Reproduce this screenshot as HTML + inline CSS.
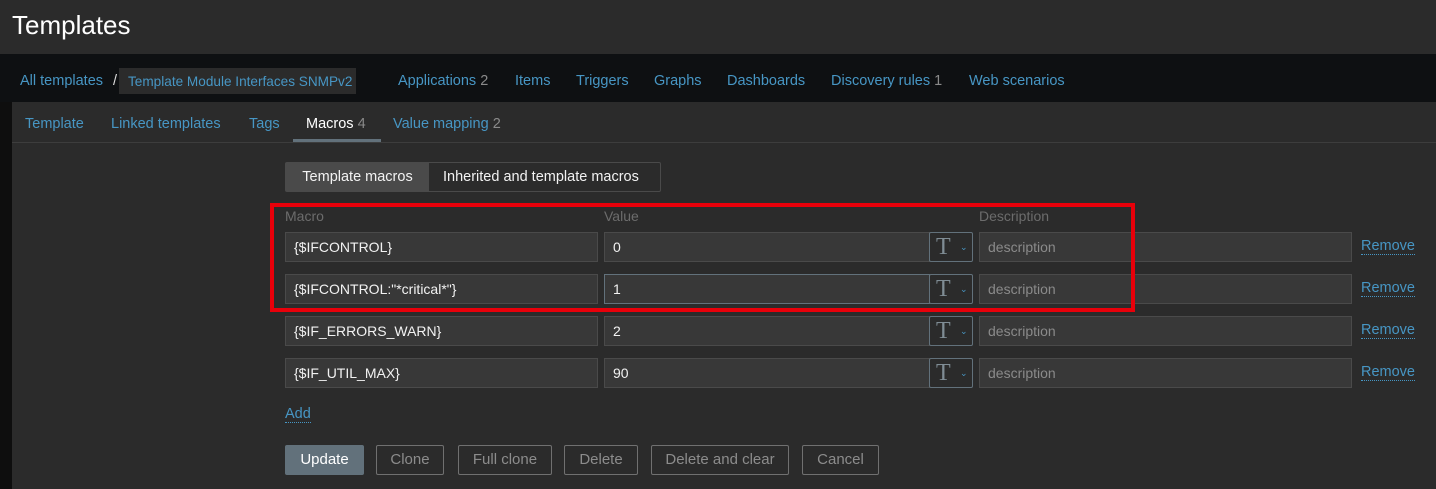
<!DOCTYPE html><html><head><style>
*{box-sizing:border-box;margin:0;padding:0}
body{width:1436px;height:489px;background:#0e0e0e;font-family:"Liberation Sans",sans-serif;font-size:14px;position:relative;overflow:hidden;color:#f2f2f2}
.a{position:absolute;white-space:nowrap}
.l{color:#4796c4}
.g{color:#8a8a8a}
.n{position:absolute;top:73px;font-size:14.5px;white-space:nowrap;color:#4796c4}
.tb{position:absolute;top:116px;font-size:14.5px;white-space:nowrap;color:#4796c4}
.in{position:absolute;height:30px;background:#383838;border:1px solid #4a4a4a;color:#f2f2f2;padding:0 8px;line-height:28px;font-size:14px}
.t{position:absolute;width:44px;height:30px;border:1px solid #62717b;border-radius:2px;background:#2b2b2b}
.t span{position:absolute;left:6px;top:0px;font-family:"Liberation Serif",serif;font-size:24px;color:#7f8c94;line-height:28px}
.t i{position:absolute;left:30px;top:9px;font-style:normal;color:#4796c4;font-size:9px}
.rm{position:absolute;left:1361px;color:#4796c4;border-bottom:1px dotted #4796c4;line-height:16px;font-size:14.5px}
.b{position:absolute;top:445px;height:30px;border:1px solid #707070;border-radius:2px;color:#8c8c8c;line-height:28px;text-align:center;font-size:15px}
</style></head><body>
<div class="a" style="left:0;top:0;width:1436px;height:54px;background:#2b2b2b"></div>
<div class="a" style="left:12px;top:10px;font-size:26px;color:#fff">Templates</div>
<div class="a" style="left:0;top:54px;width:1436px;height:48px;background:#0e1012"></div>
<div class="a" style="left:119px;top:68px;width:237px;height:26px;background:#2b2b2b"></div>
<div class="n" style="left:20px">All templates</div>
<div class="n" style="left:113px;color:#ddd">/</div>
<div class="n" style="left:128px;font-size:13.6px;top:74px">Template Module Interfaces SNMPv2</div>
<div class="n" style="left:398px">Applications <span class="g">2</span></div>
<div class="n" style="left:515px">Items</div>
<div class="n" style="left:576px">Triggers</div>
<div class="n" style="left:654px">Graphs</div>
<div class="n" style="left:727px">Dashboards</div>
<div class="n" style="left:831px">Discovery rules <span class="g">1</span></div>
<div class="n" style="left:969px">Web scenarios</div>
<div class="a" style="left:12px;top:102px;width:1424px;height:387px;background:#2b2b2b"></div>
<div class="a" style="left:12px;top:142px;width:1424px;height:1px;background:#3d3d3d"></div>
<div class="a" style="left:293px;top:139px;width:88px;height:3px;background:#62717b"></div>
<div class="tb" style="left:25px">Template</div>
<div class="tb" style="left:111px">Linked templates</div>
<div class="tb" style="left:249px">Tags</div>
<div class="tb" style="left:306px;color:#fff">Macros <span class="g">4</span></div>
<div class="tb" style="left:393px">Value mapping <span class="g">2</span></div>
<div class="a" style="left:285px;top:162px;width:376px;height:30px;border:1px solid #4a4a4a;border-radius:2px;background:#2b2b2b"></div>
<div class="a" style="left:286px;top:163px;width:143px;height:28px;background:#4a4a4a;line-height:28px;text-align:center;font-size:14.5px">Template macros</div>
<div class="a" style="left:443px;top:163px;line-height:28px;font-size:14.5px">Inherited and template macros</div>
<div class="a" style="left:285px;top:208px;color:#6c6c6c">Macro</div>
<div class="a" style="left:604px;top:208px;color:#6c6c6c">Value</div>
<div class="a" style="left:979px;top:208px;color:#6c6c6c">Description</div>

<div class="in" style="left:285px;top:232px;width:313px">{$IFCONTROL}</div>
<div class="in" style="left:604px;top:232px;width:326px">0</div>
<div class="t" style="left:929px;top:232px"><span>T</span><i>⌄</i></div>
<div class="in" style="left:979px;top:232px;width:373px;color:#8a8a8a">description</div>
<div class="rm" style="top:238px">Remove</div>

<div class="in" style="left:285px;top:274px;width:313px">{$IFCONTROL:"*critical*"}</div>
<div class="in" style="left:604px;top:274px;width:326px;border-color:#62717b">1</div>
<div class="t" style="left:929px;top:274px"><span>T</span><i>⌄</i></div>
<div class="in" style="left:979px;top:274px;width:373px;color:#8a8a8a">description</div>
<div class="rm" style="top:280px">Remove</div>

<div class="in" style="left:285px;top:316px;width:313px">{$IF_ERRORS_WARN}</div>
<div class="in" style="left:604px;top:316px;width:326px">2</div>
<div class="t" style="left:929px;top:316px"><span>T</span><i>⌄</i></div>
<div class="in" style="left:979px;top:316px;width:373px;color:#8a8a8a">description</div>
<div class="rm" style="top:322px">Remove</div>

<div class="in" style="left:285px;top:358px;width:313px">{$IF_UTIL_MAX}</div>
<div class="in" style="left:604px;top:358px;width:326px">90</div>
<div class="t" style="left:929px;top:358px"><span>T</span><i>⌄</i></div>
<div class="in" style="left:979px;top:358px;width:373px;color:#8a8a8a">description</div>
<div class="rm" style="top:364px">Remove</div>

<div class="a" style="left:270px;top:203px;width:865px;height:109px;border:4px solid #e8000a"></div>
<div class="a l" style="left:285px;top:406px;border-bottom:1px dotted #4796c4;line-height:16px;font-size:14.5px">Add</div>

<div class="b" style="left:285px;width:79px;background:#62717b;border-color:#62717b;color:#fff">Update</div>
<div class="b" style="left:376px;width:68px">Clone</div>
<div class="b" style="left:458px;width:94px">Full clone</div>
<div class="b" style="left:564px;width:74px">Delete</div>
<div class="b" style="left:651px;width:138px">Delete and clear</div>
<div class="b" style="left:802px;width:77px">Cancel</div>
</body></html>
